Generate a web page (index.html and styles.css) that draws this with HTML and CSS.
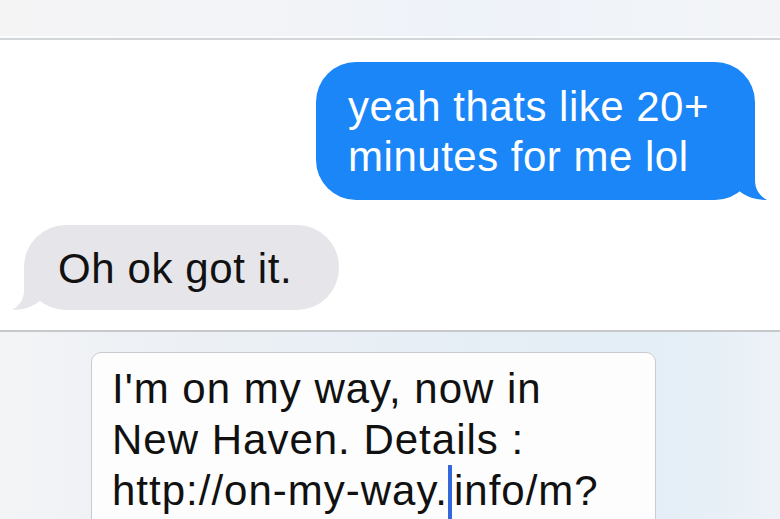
FILE: index.html
```html
<!DOCTYPE html>
<html>
<head>
<meta charset="utf-8">
<link rel="stylesheet" href="styles.css">
</head>
<body>
<div class="screen">
  <div class="topbar"></div>
  <div class="thread">
    <div class="row row-out">
      <div class="bubble bubble-out">yeah thats like 20+<br>minutes for me lol
        <svg class="tail tail-out" width="40" height="42" viewBox="0 0 40 42"><path d="M0 36 C4 34 8 32 10 30 C18 37 28 40 39 40 C32 36 27 30 27 20 L27 0 L0 0 Z" fill="#1a86f8"/></svg>
      </div>
    </div>
    <div class="row row-in">
      <div class="bubble bubble-in">Oh ok got it.
        <svg class="tail tail-in" width="40" height="42" viewBox="0 0 40 42"><path d="M0 36 C4 34 8 32 10 30 C18 37 28 40 39 40 C32 36 27 30 27 20 L27 0 L0 0 Z" fill="#e5e5ea"/></svg>
      </div>
    </div>
  </div>
  <div class="composer">
    <div class="field">I'm on my way, now in<br>New Haven. Details :<br>http://on-my-way.<span class="caret"></span>info/m?</div>
  </div>
</div>
</body>
</html>
```

FILE: styles.css
```css
* { box-sizing: border-box; }
html, body { margin: 0; padding: 0; }
body {
  width: 780px;
  height: 519px;
  overflow: hidden;
  background: #fff;
  font-family: "Liberation Sans", Arial, sans-serif;
}
.screen {
  width: 780px;
  height: 519px;
  display: flex;
  flex-direction: column;
  overflow: hidden;
}
.topbar {
  height: 40px;
  flex: none;
  background: linear-gradient(90deg, #f4f4f5 0%, #f1f3f7 40%, #eef2f9 60%, #f2f4f7 100%);
  border-bottom: 2px solid #d3d6d9;
  box-shadow: inset 0 -2px 0 #fafbfc;
}
.thread {
  height: 290px;
  flex: none;
  background: #fff;
  padding-top: 22px;
  display: flex;
  flex-direction: column;
}
.row { display: flex; }
.row-out { justify-content: flex-end; padding-right: 25px; }
.row-in { justify-content: flex-start; padding-left: 24px; margin-top: 25px; }
.bubble {
  position: relative;
  font-size: 42px;
  line-height: 50px;
  letter-spacing: 0.5px;
}
.bubble-out {
  background: #1a86f8;
  color: #fff;
  border-radius: 40px;
  padding: 20px 46px 18px 32px;
}
.bubble-in {
  background: #e5e5ea;
  color: #111;
  border-radius: 42px;
  padding: 19px 47px 16px 34px;
  letter-spacing: 0.6px;
}
.tail {
  position: absolute;
  bottom: -2px;
}
.tail-out { right: -13px; }
.tail-in { left: -13px; transform: scaleX(-1); }
.composer {
  flex: 1;
  border-top: 2px solid #c6c8cb;
  background: linear-gradient(90deg, #f3f4f6 0%, #eef1f5 15%, #e6eef5 60%, #e3eef6 85%, #edf2f7 100%);
  padding: 20px 0 0 91px;
}
.field {
  width: 565px;
  height: 200px;
  background: #fdfdfd;
  border: 1px solid #c8ccd1;
  border-radius: 10px;
  padding: 10px 0 0 20px;
  font-size: 42px;
  line-height: 51px;
  letter-spacing: 1px;
  color: #111;
}
.caret {
  display: inline-block;
  width: 4px;
  height: 54px;
  background: #3466dc;
  vertical-align: -14px;
  margin: 0 2px 0 0;
}
```
